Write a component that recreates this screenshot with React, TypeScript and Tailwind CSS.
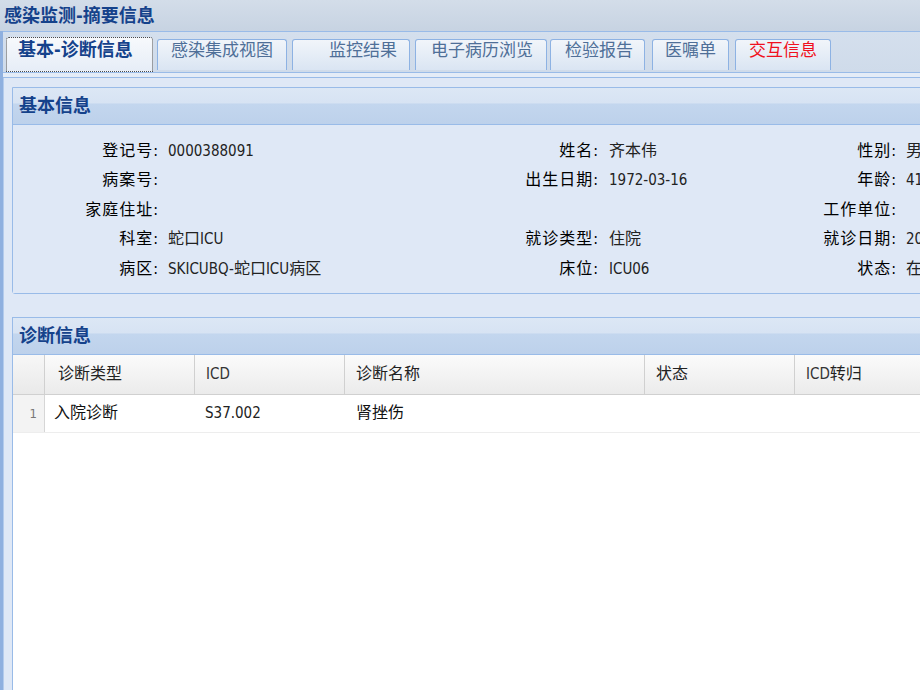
import React from 'react';

const tabs = [
  { label: '基本-诊断信息', cls: 'ml-[3px] w-[147px] pl-[11px]', active: true },
  { label: '感染集成视图', cls: 'ml-[4px] w-[130px] pl-[13px]' },
  { label: '监控结果', cls: 'ml-[5px] w-[118px] pl-[36px]' },
  { label: '电子病历浏览', cls: 'ml-[5px] w-[132px] pl-[15px]' },
  { label: '检验报告', cls: 'ml-[3px] w-[95px] pl-[14px]' },
  { label: '医嘱单', cls: 'ml-[7px] w-[77px] pl-[12px]' },
  { label: '交互信息', cls: 'ml-[6px] w-[96px] pl-[13px]', red: true },
];

const rows: string[][] = [
  ['登记号', '0000388091', '姓名', '齐本伟', '性别', '男'],
  ['病案号', '', '出生日期', '1972-03-16', '年龄', '41岁'],
  ['家庭住址', '', '', '', '工作单位', ''],
  ['科室', '蛇口ICU', '就诊类型', '住院', '就诊日期', '2013-07-15'],
  ['病区', 'SKICUBQ-蛇口ICU病区', '床位', 'ICU06', '状态', '在院'],
];

const headerBg =
  'bg-[linear-gradient(to_bottom,#dce7f5_0%,#d7e3f3_42%,#c3d6ee_44%,#bdd1eb_100%)]';

function Mixed({ text }: { text: string }) {
  const parts = text.split(/([\x00-\x7f]+)/).filter((p) => p !== '');
  return (
    <>
      {parts.map((p, i) =>
        /^[\x00-\x7f]+$/.test(p) ? (
          <span key={i} className="text-[15px]">
            {p}
          </span>
        ) : (
          <span key={i}>{p}</span>
        )
      )}
    </>
  );
}

function Label({ text, cls }: { text: string; cls: string }) {
  return (
    <div className={`${cls} text-right text-black whitespace-nowrap tracking-[1px]`}>
      {text ? `${text}:` : ''}
    </div>
  );
}

function Value({ text, cls }: { text: string; cls: string }) {
  return (
    <div className={`${cls} text-[#222] whitespace-nowrap`}>
      <Mixed text={text} />
    </div>
  );
}

export default function App() {
  return (
    <div className="w-[920px] h-[690px] overflow-hidden flex flex-col bg-[#dfe8f6] font-['DejaVu_Sans_Condensed','DejaVu_Sans','Noto_Sans_CJK_SC',sans-serif]">
      {/* title bar */}
      <div className="h-[31px] shrink-0 flex items-center pl-[4px] bg-[linear-gradient(to_bottom,#d3dde9,#c7d3e2)] text-[18px] font-bold text-[#15428b] leading-none">
        感染监测-摘要信息
      </div>

      <div className="flex-1 flex flex-col border-l-[3px] border-l-[#8fb0df] min-h-0">
        {/* tab strip */}
        <div className="h-[41px] shrink-0 border-t border-t-[#99bbe8] bg-[linear-gradient(to_bottom,#d4dfed,#cfdbea)] flex items-end">
          {tabs.map((t) =>
            t.active ? (
              <div
                key={t.label}
                className={`${t.cls} h-[35px] shrink-0 rounded-t-[3px] border border-dotted border-[#4a4a4a] bg-[linear-gradient(to_bottom,#f7f9fc,#e6edf7)] text-[18px] font-bold text-[#15428b] leading-[23px] whitespace-nowrap`}
              >
                {t.label}
              </div>
            ) : (
              <div
                key={t.label}
                className={`${t.cls} h-[31px] mb-[2px] shrink-0 rounded-t-[3px] border border-b-0 border-[#8db2e3] bg-[linear-gradient(to_bottom,#f1f5fa,#dae5f3)] text-[17px] leading-[21px] whitespace-nowrap ${
                  t.red ? 'text-[#f01020]' : 'text-[#4f6f98]'
                }`}
              >
                {t.label}
              </div>
            )
          )}
        </div>
        <div className="h-[6px] shrink-0 border-y border-[#99bbe8] bg-[#e4ecf7]" />

        {/* body */}
        <div className="flex-1 min-h-0 flex flex-col pl-[8px] pt-[9px] border-l border-l-[#b3cbec]">
          {/* panel 1 */}
          <div className="w-[1000px] shrink-0 border border-[#99bbe8] rounded-bl-[3px]">
            <div className={`h-[37px] border-b border-[#99bbe8] ${headerBg} pl-[6px] flex items-center text-[18px] font-bold text-[#15428b] leading-none`}>
              基本信息
            </div>
            <div className="bg-[#dfe8f6] pt-[11px] pb-[9px] text-[16px]">
              {rows.map((r, i) => (
                <div key={i} className="h-[29.5px] flex items-center leading-none">
                  <Label text={r[0]} cls="w-[146px]" />
                  <Value text={r[1]} cls="w-[310px] pl-[9px]" />
                  <Label text={r[2]} cls="w-[130px]" />
                  <Value text={r[3]} cls="w-[168px] pl-[10px]" />
                  <Label text={r[4]} cls="w-[130px]" />
                  <Value text={r[5]} cls="pl-[9px]" />
                </div>
              ))}
            </div>
          </div>

          {/* panel 2 */}
          <div className="w-[1000px] mt-[23px] flex-1 flex flex-col border-t border-x border-[#99bbe8] bg-white">
            <div className={`h-[37px] shrink-0 border-b border-[#99bbe8] ${headerBg} pl-[6px] flex items-center text-[18px] font-bold text-[#15428b] leading-none`}>
              诊断信息
            </div>
            {/* grid header */}
            <div className="h-[40px] shrink-0 flex border-b border-[#d0d0d0] bg-[linear-gradient(to_bottom,#fbfbfb,#ebebeb)] text-[16px] text-[#222] leading-none">
              <div className="w-[32px] border-r border-[#d0d0d0] bg-[linear-gradient(to_bottom,#f7f7f7,#e9e9e9)]" />
              <div className="w-[150px] border-r border-[#d0d0d0] pl-[13px] flex items-center">诊断类型</div>
              <div className="w-[150px] border-r border-[#d0d0d0] pl-[11px] flex items-center text-[15px] text-[#333]">ICD</div>
              <div className="w-[300px] border-r border-[#d0d0d0] pl-[11px] flex items-center">诊断名称</div>
              <div className="w-[150px] border-r border-[#d0d0d0] pl-[11px] flex items-center">状态</div>
              <div className="w-[150px] border-r border-[#d0d0d0] pl-[11px] flex items-center">
                <span className="text-[15px] text-[#333]">ICD</span>转归
              </div>
            </div>
            {/* data row */}
            <div className="h-[38px] shrink-0 flex border-b border-[#ededed] text-[16px] text-[#111] leading-none">
              <div className="w-[32px] border-r border-[#d6d6d6] bg-[#f3f3f3] flex items-center justify-end pr-[7px] text-[13px] text-[#777]">
                1
              </div>
              <div className="w-[150px] pl-[9px] flex items-center">入院诊断</div>
              <div className="w-[150px] pl-[10px] flex items-center text-[15px] text-[#222]">S37.002</div>
              <div className="w-[300px] pl-[11px] flex items-center">肾挫伤</div>
              <div className="w-[150px]" />
              <div className="w-[150px]" />
            </div>
            <div className="flex-1" />
          </div>
        </div>
      </div>
    </div>
  );
}
